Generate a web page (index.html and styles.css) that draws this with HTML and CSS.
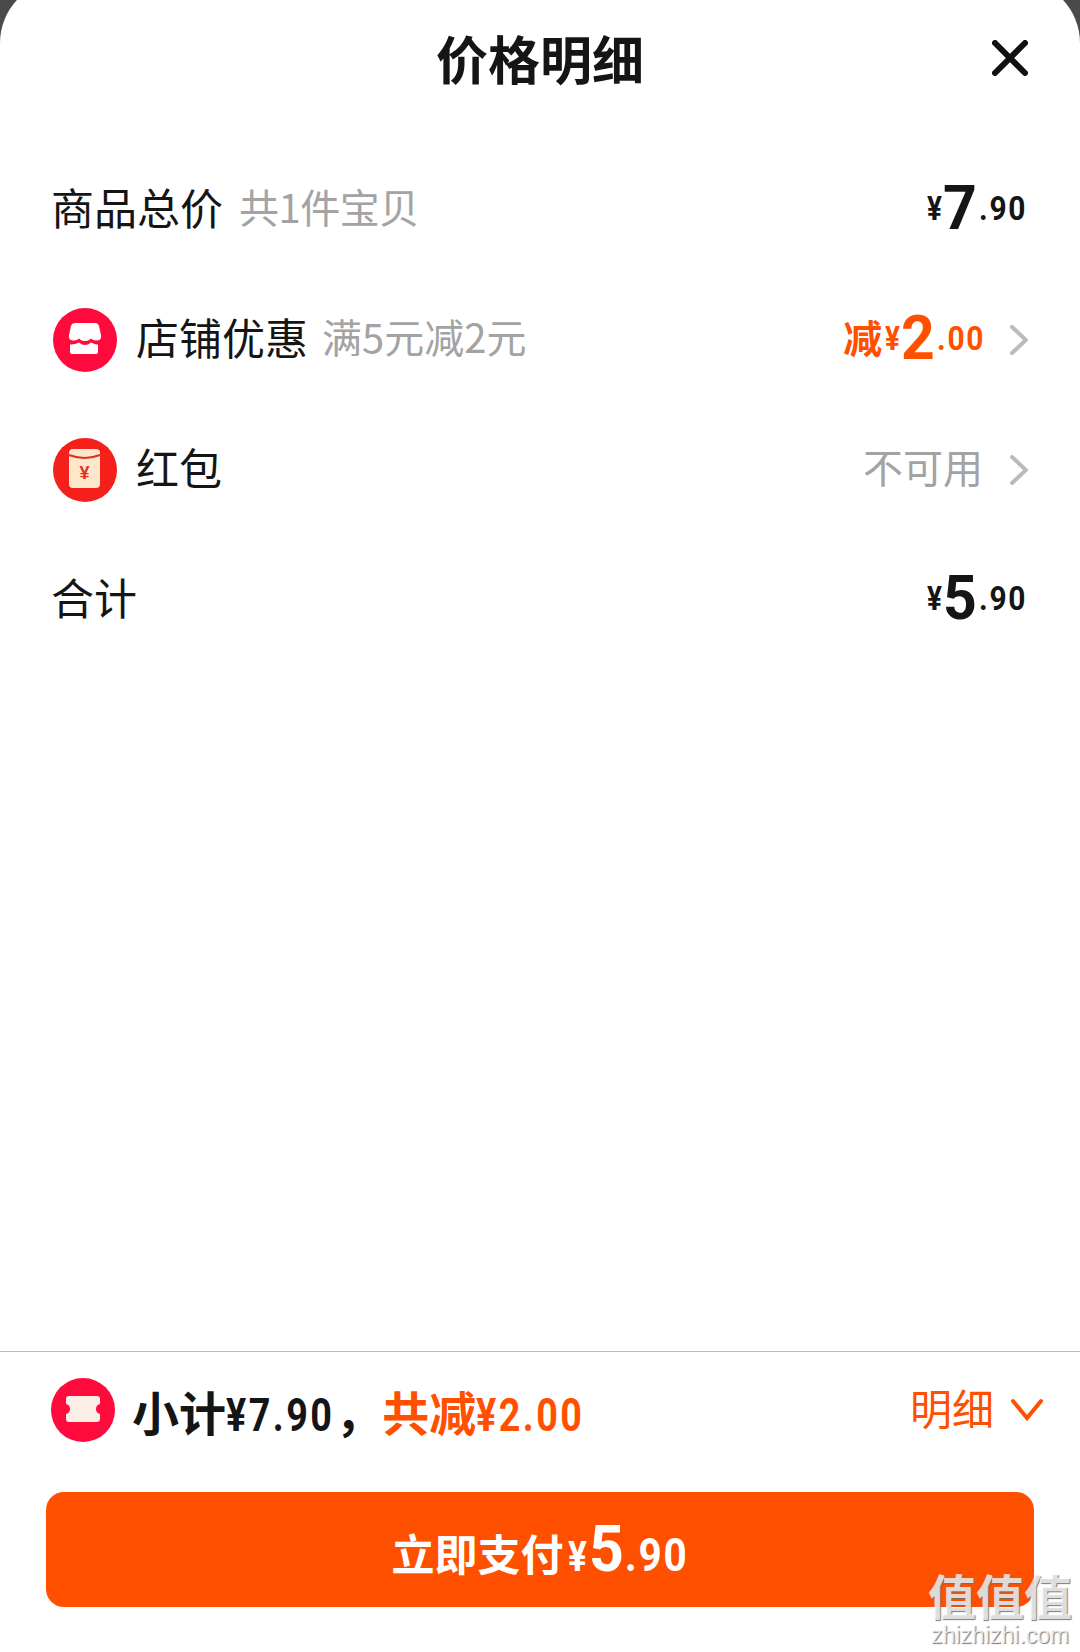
FILE: index.html
```html
<!DOCTYPE html>
<html>
<head>
  <meta charset="UTF-8">
  <title>价格明细</title>
  <link rel="stylesheet" href="styles.css">
</head>
<body>
  <div class="sheet">
    <header class="sheet-head">
      <span></span>
      <h1>价格明细</h1>
      <svg class="close" viewBox="0 0 36 36"><path d="M3 3L33 33M33 3L3 33"/></svg>
    </header>

    <main class="rows">
      <div class="row">
        <div class="row-label">商品总价<span class="note first-note">共1件宝贝</span></div>
        <div class="price"><span class="yen">¥</span><span class="big">7</span><span class="cents">.90</span></div>
      </div>
      <div class="row">
        <div class="row-label">
          <svg class="badge" viewBox="0 0 64 64">
            <circle cx="32" cy="32" r="32" fill="#ff0a3c"/>
            <path fill="#fff" d="M22 15H42Q45 15 46 18L48 27Q49 32 44 32.500Q40 33 38 30.500Q35 33.500 32 33Q29 33.500 26 30.500Q24 33 20 32.500Q15 32 16 27L18 18Q19 15 22 15Z"/>
            <path fill="#fff" d="M17 36.500Q21 37 26 34.500Q29 37 32 37Q35 37 38 34.500Q43 37 45 36.500V44Q45 46 43 46H19Q17 46 17 44Z"/>
          </svg>
          店铺优惠<span class="note">满5元减2元</span>
        </div>
        <div class="row-end">
          <div class="price discount"><span class="cut">减</span><span class="yen">¥</span><span class="big">2</span><span class="cents">.00</span></div>
          <svg class="more" viewBox="0 0 18 30"><path d="M2 2L16 15L2 28"/></svg>
        </div>
      </div>
      <div class="row">
        <div class="row-label">
          <svg class="badge" viewBox="0 0 64 64">
            <circle cx="32" cy="32" r="32" fill="#f5201c"/>
            <rect x="16" y="11" width="31" height="39" rx="4" fill="#fde7cb"/>
            <path d="M16 17Q31.500 23 47 17" fill="none" stroke="#e0301e" stroke-width="2"/>
            <text x="31.500" y="41" class="badge-yen">¥</text>
          </svg>
          红包
        </div>
        <div class="row-end">
          <span class="note none">不可用</span>
          <svg class="more" viewBox="0 0 18 30"><path d="M2 2L16 15L2 28"/></svg>
        </div>
      </div>
      <div class="row">
        <div class="row-label">合计</div>
        <div class="price"><span class="yen">¥</span><span class="big">5</span><span class="cents">.90</span></div>
      </div>
    </main>

    <footer class="foot">
      <div class="summary">
        <div class="summary-text">
          <svg class="badge" viewBox="0 0 64 64">
            <circle cx="32" cy="32" r="32" fill="#ff0a3c"/>
            <path fill="#fbeee6" d="M18 18H46Q49 18 49 21V26Q45 27 45 31Q45 35 49 36V41Q49 44 46 44H18Q15 44 15 41V36Q19 35 19 31Q19 27 15 26V21Q15 18 18 18Z"/>
          </svg>
          <span class="sum-line">小计<span class="num">¥7.90</span>，</span>
          <span class="sum-line off">共减<span class="num">¥2.00</span></span>
        </div>
        <div class="detail">明细<svg class="fold" viewBox="0 0 32 24"><path d="M2 3L16 20L30 3"/></svg></div>
      </div>
      <button class="pay">立即支付<span class="yen">¥</span><span class="big">5</span><span class="cents">.90</span></button>
    </footer>

    <div class="watermark">
      <div class="mark-cn">值值值</div>
      <div class="mark-en">zhizhizhi.com</div>
    </div>
  </div>
</body>
</html>
```

FILE: styles.css
```css
* {
  box-sizing: border-box;
}

html, body {
  height: 100%;
}

body {
  margin: 0;
  overflow: hidden;
  background-color: #4a4a4a;
  color: #151515;
  font-family: "Noto Sans CJK SC", sans-serif;
}

.sheet {
  position: relative;
  display: flex;
  flex-direction: column;
  height: 1672px;
  margin-top: -20px;
  padding-top: 20px;
  background-color: #fff;
  border-radius: 63px 63px 0 0;
}

.sheet-head {
  display: grid;
  grid-template-columns: 1fr auto 1fr;
  align-items: center;
  height: 120px;
  padding: 0 52px;
}

h1 {
  margin: 0 0 4px 0;
  font-size: 52px;
  font-weight: 700;
  line-height: 1;
}

.close {
  justify-self: end;
  width: 36px;
  height: 36px;
  margin-bottom: 5px;
  fill: none;
  stroke: #111;
  stroke-width: 6;
  stroke-linecap: round;
}

.rows {
  padding: 23px 52px 0 51px;
}

.row {
  display: flex;
  align-items: center;
  justify-content: space-between;
  height: 130px;
}

.row-label {
  display: flex;
  align-items: center;
  padding-bottom: 4px;
  font-size: 43px;
  line-height: 1;
}

.badge {
  flex: none;
  width: 64px;
  height: 64px;
  margin: 8px 19px 0 2px;
}

.badge-yen {
  fill: #e0301e;
  font-family: "Liberation Sans", sans-serif;
  font-size: 18px;
  font-weight: 700;
  text-anchor: middle;
}

.note {
  margin-left: 14px;
  color: #a3a3a3;
  font-size: 40px;
}

.first-note {
  margin-left: 16px;
  letter-spacing: -0.500px;
}

.note.none {
  margin-left: 0;
  padding-bottom: 5px;
  line-height: 1;
}

.row-end {
  display: flex;
  align-items: center;
}

.more {
  width: 18px;
  height: 30px;
  margin: 3px 0 0 27px;
  fill: none;
  stroke: #bbb;
  stroke-width: 4;
  stroke-linecap: round;
}

/* digits are narrower than Roboto, so squeeze them and pull the boxes back in */
.yen,
.big,
.cents {
  display: inline-block;
  font-family: "Roboto", sans-serif;
  font-weight: 700;
  transform-origin: left;
}

.price {
  display: flex;
  align-items: center;
  margin-right: 3px;
  line-height: 1;
}

.row-end .price {
  margin-right: 0;
}

.yen {
  margin-right: -3px;
  font-size: 34px;
  transform: scaleX(0.82);
}

.big {
  margin-right: 1px;
  font-size: 62px;
  transform: scaleX(0.95);
}

.cents {
  margin-right: -9px;
  font-size: 34px;
  letter-spacing: 2px;
  transform: scaleX(0.88);
}

.discount {
  color: #ff5000;
}

.cut {
  margin-right: 3px;
  padding-bottom: 4px;
  font-size: 39px;
  font-weight: 700;
}

.foot {
  margin-top: auto;
  border-top: 1px solid #bbb;
}

.summary {
  display: flex;
  align-items: center;
  justify-content: space-between;
  height: 124px;
  padding: 0 37px 0 52px;
}

.summary-text {
  display: flex;
  align-items: center;
}

.summary-text .badge {
  margin: 0 17px 8px -1px;
}

.sum-line {
  margin-bottom: 4px;
  font-size: 47px;
  font-weight: 700;
  line-height: 1;
}

.sum-line .num {
  display: inline-block;
  margin-right: -23px;
  font-family: "Roboto", sans-serif;
  font-size: 46px;
  font-weight: 700;
  letter-spacing: 3px;
  transform: scaleX(0.82);
  transform-origin: left;
}

.off {
  color: #ff5000;
}

.detail {
  display: flex;
  align-items: center;
  margin-bottom: 14px;
  color: #ff5000;
  font-size: 42px;
  line-height: 1;
}

.fold {
  width: 32px;
  height: 24px;
  margin: 6px 0 0 17px;
  fill: none;
  stroke: #ff5000;
  stroke-width: 4;
  stroke-linecap: round;
}

.pay {
  display: flex;
  align-items: baseline;
  justify-content: center;
  width: 988px;
  height: 115px;
  margin: 16px 0 45px 46px;
  padding: 26px 0 0 0;
  border: none;
  border-radius: 18px;
  background-color: #ff5000;
  color: #fff;
  font-family: inherit;
  font-size: 43px;
  font-weight: 700;
  line-height: 1;
}

.pay .yen {
  margin: 0 -2px 0 4px;
  font-size: 43px;
}

.pay .big {
  margin-right: 0;
  font-size: 64px;
}

.pay .cents {
  margin-right: -9px;
  font-size: 46px;
  letter-spacing: 2px;
}

/* site watermark over the bottom right corner */
.watermark {
  position: absolute;
  right: 7px;
  bottom: 4px;
  width: 146px;
  text-align: center;
  color: rgba(255, 255, 255, 0.75);
  text-shadow: 1px 1px 1px rgba(110, 110, 110, 0.9);
}

.mark-cn {
  font-size: 48px;
  font-weight: 700;
  line-height: 56px;
}

.mark-en {
  font-family: "Liberation Sans", sans-serif;
  font-size: 23px;
  line-height: 26px;
  white-space: nowrap;
}
```
